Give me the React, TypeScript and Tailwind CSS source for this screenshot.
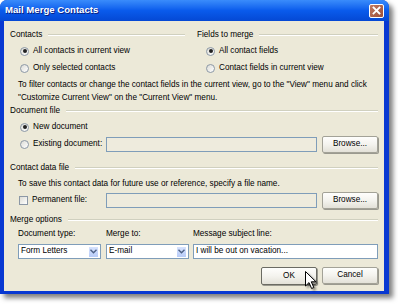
import React from 'react';

function GroupHeader({ label }: { label: string }) {
  return (
    <div className="flex items-center h-[12px]">
      <span className="whitespace-nowrap">{label}</span>
      <div className="flex-1 ml-[6px] h-[2px] border-t border-[#D0D0BF] border-b border-b-white" />
    </div>
  );
}

function Radio({ checked, label }: { checked?: boolean; label: string }) {
  return (
    <div className="flex items-center h-[12px] whitespace-nowrap">
      <span className="w-[9px] h-[9px] rounded-full border border-[#8C98A6] bg-gradient-to-br from-[#DCDCD6] to-white flex items-center justify-center">
        {checked && <span className="w-[4px] h-[4px] rounded-full bg-[#222222]" />}
      </span>
      <span className="ml-[4px]">{label}</span>
    </div>
  );
}

function Button({ label, isDefault }: { label: string; isDefault?: boolean }) {
  return (
    <div
      className={`w-[56px] flex items-center justify-center rounded-[2px] bg-gradient-to-b from-[#FEFEFC] via-[#F4F3EE] to-[#E3E1D8] border shadow-[1px_1px_0_#9A998F] ${
        isDefault ? 'h-[18px] border-[#6B6B63]' : 'h-[17px] border-[#A3A297]'
      }`}
    >
      {label}
    </div>
  );
}

function Select({ value }: { value: string }) {
  return (
    <div className="h-[15px] border border-[#7F9DB9] bg-white flex items-center justify-between pl-[2px] pr-[1px]">
      <span>{value}</span>
      <span className="w-[11px] h-[12px] rounded-[1px] bg-gradient-to-b from-[#D6E2FD] to-[#B8CCF8] border border-white flex items-center justify-center">
        <svg width="7" height="5" viewBox="0 0 7 5">
          <path d="M0.5 0.8 L3.5 3.8 L6.5 0.8" fill="none" stroke="#4D6185" strokeWidth="1.4" />
        </svg>
      </span>
    </div>
  );
}

export default function App() {
  return (
    <div className="relative w-[398px] h-[304px] bg-white overflow-hidden font-['Liberation_Sans',Arial,sans-serif] text-[8.2px] text-black">
      {/* Window */}
      <div className="w-[389px] h-[294px] rounded-t-[7px] bg-[#0838D2] flex flex-col shadow-[4px_4px_5px_rgba(0,0,0,0.5)]">
        {/* Title bar */}
        <div className="h-[21px] rounded-t-[7px] bg-gradient-to-b from-[#3A8CFB] via-[#0A5BEC] to-[#0548D4] flex items-center justify-between pl-[5px] pr-[5px]">
          <span className="text-white font-bold text-[9.6px] [text-shadow:1px_1px_0_#0A1E80]">Mail Merge Contacts</span>
          <div className="w-[15px] h-[14px] rounded-[2px] border border-white bg-gradient-to-br from-[#C27A62] to-[#9C4F38] flex items-center justify-center">
            <svg width="9" height="9" viewBox="0 0 9 9">
              <path d="M1.5 1.5 L7.5 7.5 M7.5 1.5 L1.5 7.5" stroke="white" strokeWidth="1.8" strokeLinecap="square" />
            </svg>
          </div>
        </div>

        {/* Content */}
        <div className="flex-1 ml-[4px] mr-[5px] mb-[3px] bg-[#ECE9D8] pl-[6px] pr-[6px] pt-[8px] flex flex-col">
          {/* Contacts / Fields to merge */}
          <div className="flex gap-[12px]">
            <div className="w-[175px] flex flex-col">
              <GroupHeader label="Contacts" />
              <div className="pl-[10px] mt-[4px]">
                <Radio checked label="All contacts in current view" />
              </div>
              <div className="pl-[10px] mt-[5px]">
                <Radio label="Only selected contacts" />
              </div>
            </div>
            <div className="flex-1 flex flex-col">
              <GroupHeader label="Fields to merge" />
              <div className="pl-[9px] mt-[4px]">
                <Radio checked label="All contact fields" />
              </div>
              <div className="pl-[9px] mt-[5px]">
                <Radio label="Contact fields in current view" />
              </div>
            </div>
          </div>

          <p className="mt-[4px] pl-[8px] leading-[13px] whitespace-nowrap">
            To filter contacts or change the contact fields in the current view, go to the "View" menu and click
            <br />
            "Customize Current View" on the "Current View" menu.
          </p>

          {/* Document file */}
          <div className="mt-[1px]">
            <GroupHeader label="Document file" />
          </div>
          <div className="pl-[10px] mt-[4px]">
            <Radio checked label="New document" />
          </div>
          <div className="mt-[3px] h-[17px] flex items-center">
            <div className="w-[96px] pl-[10px]">
              <Radio label="Existing document:" />
            </div>
            <div className="w-[211px] h-[15px] border border-[#7F9DB9] bg-[#EEEBDD]" />
            <div className="ml-[5px]">
              <Button label="Browse..." />
            </div>
          </div>

          {/* Contact data file */}
          <div className="mt-[9px]">
            <GroupHeader label="Contact data file" />
          </div>
          <div className="mt-[4px] h-[12px] pl-[8px] flex items-center whitespace-nowrap">
            To save this contact data for future use or reference, specify a file name.
          </div>
          <div className="mt-[2px] h-[17px] flex items-center">
            <div className="w-[96px] pl-[9px] flex items-center whitespace-nowrap">
              <span className="w-[9px] h-[9px] border border-[#8C98A6] bg-gradient-to-br from-[#DCDCD6] to-white" />
              <span className="ml-[4px]">Permanent file:</span>
            </div>
            <div className="w-[211px] h-[15px] border border-[#7F9DB9] bg-[#EEEBDD]" />
            <div className="ml-[5px]">
              <Button label="Browse..." />
            </div>
          </div>

          {/* Merge options */}
          <div className="mt-[5px]">
            <GroupHeader label="Merge options" />
          </div>
          <div className="mt-[2px] pl-[8px] flex gap-[4px]">
            <div className="w-[83px] flex flex-col">
              <div className="h-[12px] flex items-center">Document type:</div>
              <div className="mt-[4px]">
                <Select value="Form Letters" />
              </div>
            </div>
            <div className="w-[83px] ml-[1px] flex flex-col">
              <div className="h-[12px] flex items-center">Merge to:</div>
              <div className="mt-[4px]">
                <Select value="E-mail" />
              </div>
            </div>
            <div className="flex-1 flex flex-col">
              <div className="h-[12px] flex items-center">Message subject line:</div>
              <div className="mt-[4px] h-[15px] border border-[#7F9DB9] bg-white flex items-center pl-[2px] whitespace-nowrap">
                I will be out on vacation...
              </div>
            </div>
          </div>

          <div className="mt-[8px] flex justify-end items-start gap-[5px]">
            <Button label="OK" isDefault />
            <Button label="Cancel" />
          </div>
        </div>
      </div>

      {/* Mouse pointer */}
      <svg
        className="absolute left-[305px] top-[271px] drop-shadow-[2px_2px_1px_rgba(0,0,0,0.4)]"
        width="13"
        height="19"
        viewBox="0 0 13 19"
      >
        <path d="M0.5 0.5 L0.5 15 L4 11.6 L6.6 17.5 L8.8 16.5 L6.3 10.8 L11 10.8 Z" fill="white" stroke="black" strokeWidth="1" />
      </svg>
    </div>
  );
}
